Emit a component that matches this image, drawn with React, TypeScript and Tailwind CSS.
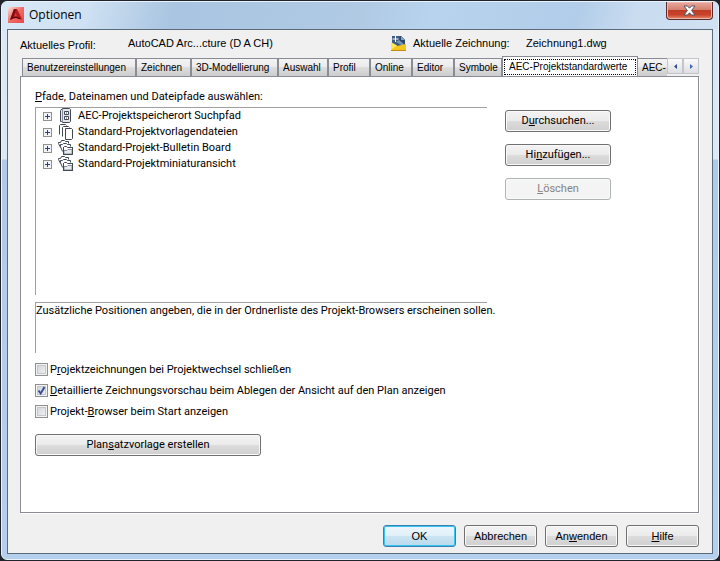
import { useState } from "react";

const dialogFont = "font-['Liberation_Sans',Arial,sans-serif]";
const panelFont = "font-['Roboto','Liberation_Sans',sans-serif]";

const buttonBase =
  "h-[22px] rounded-[3px] border border-[#707070] bg-[linear-gradient(#f3f3f3_0%,#ebebeb_48%,#dcdcdc_52%,#cfcfcf_100%)] text-center shadow-[inset_0_0_0_1px_#fafafa] disabled:border-[#adb2b5] disabled:bg-none disabled:bg-[#f4f4f4] disabled:text-[#838383]";

const tabs = [
  { label: "Benutzereinstellungen", width: "w-[114px]" },
  { label: "Zeichnen", width: "w-[55px]" },
  { label: "3D-Modellierung", width: "w-[87px]" },
  { label: "Auswahl", width: "w-[50px]" },
  { label: "Profil", width: "w-[42px]" },
  { label: "Online", width: "w-[42px]" },
  { label: "Editor", width: "w-[42px]" },
  { label: "Symbole", width: "w-[48px]" },
  { label: "AEC-Projektstandardwerte", width: "w-[136px]" },
];

const treeItems = [
  { label: "AEC-Projektspeicherort Suchpfad", icon: "cabinet" },
  { label: "Standard-Projektvorlagendateien", icon: "pages" },
  { label: "Standard-Projekt-Bulletin Board", icon: "folders" },
  { label: "Standard-Projektminiaturansicht", icon: "folders" },
];

function AppLogo() {
  return (
    <svg className="h-4 w-4" viewBox="0 0 16 16">
      <defs>
        <linearGradient id="logo" x1="0" y1="0" x2="1" y2="1">
          <stop offset="0" stopColor="#fbe3e0" />
          <stop offset="0.5" stopColor="#ef6a66" />
          <stop offset="1" stopColor="#e9474a" />
        </linearGradient>
      </defs>
      <rect width="16" height="16" fill="url(#logo)" />
      <path d="M6 2h3l5 10-4-1H5l-3 2z" fill="#b51a1c" />
      <path d="M6 2h2L5 11l-3 2z" fill="#7a0b0e" />
      <path d="M7.5 6L9 9H6.4z" fill="#dc3a3c" />
      <path d="M2 13l3-3h5l4 2.5-3-.5-3-1-3 .5z" fill="#5c0709" />
    </svg>
  );
}

function DrawingIcon() {
  return (
    <svg className="h-4 w-4" viewBox="0 0 16 16">
      <path d="M2 1h8l4 4v9H1V1z" fill="#3d5c84" />
      <path d="M9 1h1l4 4v6L8 6z" fill="#2c486c" />
      <path d="M10 1v4h4z" fill="#8ca3bd" />
      <path d="M5 7l3-2 6 5v2z" fill="#7995b3" />
      <path d="M4.5 1v6M1.5 4h6" stroke="#fff" />
      <path d="M0 8h1l5 3 9-2v7H0z" fill="#f4c51c" />
      <path d="M0 7l6 3.500-6 4.500z" fill="#ffe45c" />
      <path d="M0 15.500h15" stroke="#c48a0c" />
    </svg>
  );
}

function TreeIcon({ kind }: { kind: string }) {
  if (kind === "cabinet") {
    return (
      <svg className="h-4 w-4" viewBox="0 0 16 16" fill="#fff" stroke="#3f4654">
        <path d="M3.5 13.5h-1v-11l2-2h7l1 1v12l-1 1h-7z" fill="#e3e6ea" />
        <path d="M4.5 1v13" fill="none" stroke="#8a909a" />
        <path d="M6.5 3.5h4v3h-4zM6.5 8.5h4v3h-4z" />
        <path d="M8 5h1M8 10h1" />
      </svg>
    );
  }
  if (kind === "pages") {
    return (
      <svg className="h-4 w-4" viewBox="0 0 16 16" fill="#fff" stroke="#3f4654">
        <path d="M1.5 10.5v-9l1-1h5l1 1" />
        <path d="M4.5 12.5v-9l1-1h5l1 1" />
        <path d="M7.5 4.5h6l1 1v9l-1 1h-6z" />
      </svg>
    );
  }
  return (
    <svg className="h-4 w-4" viewBox="0 0 16 16" fill="#fff" stroke="#3f4654">
      <path d="M2.5 7.5l-2-4v-1h2l1-2h3l1 1h3v2" />
      <path d="M4.5 11.5l-2-5v-2h2l1-1h3l1 1h3v2" />
      <path d="M5.500 14.500v-7l1-1h2l1 1h5v7z" />
      <path d="M6 14v-3.500h3l1-1h4V14z" fill="#e9ecef" stroke="#8a909a" />
      <path d="M5.500 7v7.500h9V7" fill="none" />
    </svg>
  );
}

function Option({ id, defaultChecked = false, children }: { id: string; defaultChecked?: boolean; children: React.ReactNode }) {
  return (
    <div className="flex h-[21px] items-center gap-[2px]">
      <span className="grid h-[13px] w-[13px]">
        <input
          id={id}
          type="checkbox"
          defaultChecked={defaultChecked}
          className="peer col-start-1 row-start-1 h-[13px] w-[13px] appearance-none border border-[#8e8f8f] bg-[linear-gradient(135deg,#cbcfd5,#f6f6f6)] shadow-[inset_0_0_0_1px_#f4f4f4,inset_0_0_0_2px_#c3c7cc]"
        />
        <svg className="pointer-events-none invisible col-start-1 row-start-1 h-[13px] w-[13px] peer-checked:visible" viewBox="0 0 13 13">
          <path d="M3.5 6.5l2.2 3L9.5 3" fill="none" stroke="#3b4f93" strokeWidth="2" />
        </svg>
      </span>
      <label htmlFor={id}>{children}</label>
    </div>
  );
}

export default function App() {
  const [activeTab, setActiveTab] = useState(8);

  return (
    <div className={`flex min-h-screen flex-col bg-[#20232a] p-px text-[11px] leading-4 text-black ${dialogFont}`}>
      <div className="flex grow flex-col rounded-[6px] border border-[#e8f3fd] bg-[linear-gradient(#d8e7f6_0px,#dce8f4_157px,#b0cbe7_158px,#b5d0ec_100%)] px-[5px] pb-[5px]">
        <header className="-mx-[5px] flex h-[27px] items-start justify-between rounded-t-[5px] bg-[linear-gradient(105deg,#d9e8f6_0%,#cfe1f3_12%,#a9c5e1_24%,#b0cae4_50%,#b8d3ed_60%,#b2cde9_80%,#c9dcf0_88%,#cfe1f2_100%)] pl-[6px] pr-[5px]">
          <div className="flex items-center gap-[5px] pt-[5px]">
            <AppLogo />
            <h1 className="font-['Open_Sans',sans-serif] text-[12px] leading-4">Optionen</h1>
          </div>
          <button
            type="button"
            aria-label="Schließen"
            className="flex h-[18px] w-[47px] items-center justify-center rounded-b-[4px] border border-t-0 border-[#5b2a2c] bg-[linear-gradient(#e8aaa0_0%,#d5806f_45%,#bf3c26_50%,#c9432c_75%,#e58a6a_100%)] shadow-[inset_0_0_0_1px_#eeb9ae]"
          >
            <svg className="h-[11px] w-[13px]" viewBox="0 0 13 11">
              <path d="M1 1h3.5l2 2.2 2-2.2H12L8.6 5.5 12 10H8.5l-2-2.2-2 2.2H1l3.4-4.5z" fill="#fff" stroke="#535666" />
            </svg>
          </button>
        </header>

        <main className="flex grow flex-col border border-[#5a6b7c] bg-[#f0f0f0] px-3 pb-[6px]">
          <div className="flex h-[26px] items-center">
            <span className="w-[108px] pt-[3px]">Aktuelles Profil:</span>
            <span className="w-[263px]">AutoCAD Arc...cture (D A CH)</span>
            <DrawingIcon />
            <span className="w-[119px] pl-[6px]">Aktuelle Zeichnung:</span>
            <span>Zeichnung1.dwg</span>
          </div>

          <div className="flex h-5 items-end pl-[2px] pr-px">
            {/* the last tab is cut off by the scroll buttons */}
            <div role="tablist" className="flex min-w-0 flex-1 items-end overflow-hidden text-[10px]">
              {tabs.map((tab, index) => (
                <button
                  key={tab.label}
                  type="button"
                  role="tab"
                  aria-selected={activeTab === index}
                  onClick={() => setActiveTab(index)}
                  className={`shrink-0 whitespace-nowrap border-x border-t border-[#898c95] text-left ${tab.width} ${
                    activeTab === index
                      ? "h-5 bg-white p-px"
                      : "h-[18px] bg-[linear-gradient(#f3f3f3_0%,#ebebeb_49%,#dddddd_50%,#cdcdcd_100%)] px-1"
                  }`}
                >
                  {activeTab === index ? (
                    <span className="block border border-dotted border-black pl-1 leading-[14px]">{tab.label}</span>
                  ) : (
                    tab.label
                  )}
                </button>
              ))}
              <button
                type="button"
                role="tab"
                className="h-[18px] min-w-7 flex-1 border-t border-[#898c95] bg-[linear-gradient(#f3f3f3_0%,#ebebeb_49%,#dddddd_50%,#cdcdcd_100%)] pl-1 text-left"
              >
                AEC-
              </button>
            </div>
            <div className="flex h-[18px] items-start">
              <button type="button" aria-label="Zurück" className="flex h-4 w-4 items-center justify-center border border-[#c3c5cb] bg-[linear-gradient(#fafafa,#dedfe3)]">
                <svg className="h-[5px] w-[3px]" viewBox="0 0 3 5">
                  <path d="M3 0v5L0 2.5z" fill="#2c4a8c" />
                </svg>
              </button>
              <button type="button" aria-label="Weiter" className="flex h-4 w-4 items-center justify-center border border-[#c3c5cb] bg-[linear-gradient(#fafafa,#dedfe3)]">
                <svg className="h-[5px] w-[3px]" viewBox="0 0 3 5">
                  <path d="M0 0v5l3-2.5z" fill="#3d64b8" />
                </svg>
              </button>
            </div>
          </div>

          <div className={`mr-px grow border border-[#898c95] bg-white pl-[14px] pt-3 shadow-[1px_1px_0_#fff] ${panelFont}`}>
            <div className="flex gap-[18px]">
              <section className="w-[452px]">
                <h2 className="mb-[2px] leading-4">
                  <u>P</u>fade, Dateinamen und Dateipfade auswählen:
                </h2>
                <ul className="h-[188px] border-l border-t border-[#a0a0a0]">
                  {treeItems.map((item) => (
                    <li key={item.label} className="flex h-4 items-center pl-[7px]">
                      <button type="button" aria-label="Erweitern" className="mr-[6px] flex h-[9px] w-[9px] items-center justify-center border border-[#919191] bg-[#f4f4f4]">
                        <svg className="h-[5px] w-[5px]" viewBox="0 0 5 5">
                          <path d="M0 2.5h5M2.5 0v5" stroke="#1f3f9a" />
                        </svg>
                      </button>
                      <TreeIcon kind={item.icon} />
                      <span className="pl-[4px]">{item.label}</span>
                    </li>
                  ))}
                </ul>
                <p className="mt-[7px] h-[51px] whitespace-nowrap border-l border-t border-[#a0a0a0]">
                  Zusätzliche Positionen angeben, die in der Ordnerliste des Projekt-Browsers erscheinen sollen.
                </p>
                <div className="mt-[6px]">
                  <Option id="close-drawings">
                    P<u>r</u>ojektzeichnungen bei Projektwechsel schließen
                  </Option>
                  <Option id="detailed-preview" defaultChecked>
                    <u>D</u>etaillierte Zeichnungsvorschau beim Ablegen der Ansicht auf den Plan anzeigen
                  </Option>
                  <Option id="show-browser">
                    Projekt-<u>B</u>rowser beim Start anzeigen
                  </Option>
                </div>
                <button type="button" className={`mt-3 w-[226px] ${buttonBase}`}>
                  Plan<u>s</u>atzvorlage erstellen
                </button>
              </section>

              <div className="flex w-[106px] flex-col gap-3 pt-[21px]">
                <button type="button" className={buttonBase}>
                  D<u>u</u>rchsuchen...
                </button>
                <button type="button" className={buttonBase}>
                  Hi<u>n</u>zufügen...
                </button>
                <button type="button" disabled className={buttonBase}>
                  <u>L</u>öschen
                </button>
              </div>
            </div>
          </div>

          <footer className="flex justify-end gap-2 pr-px pt-3">
            <button
              type="button"
              className="h-[22px] w-[73px] rounded-[3px] border border-[#3c7fb1] bg-[linear-gradient(#eef6fb_0%,#e0f0f9_48%,#cbe4f2_52%,#b9daec_100%)] shadow-[inset_0_0_0_1px_#35c5f5]"
            >
              OK
            </button>
            <button type="button" className={`w-[73px] ${buttonBase}`}>
              Abbrechen
            </button>
            <button type="button" className={`w-[73px] ${buttonBase}`}>
              An<u>w</u>enden
            </button>
            <button type="button" className={`w-[73px] ${buttonBase}`}>
              <u>H</u>ilfe
            </button>
          </footer>
        </main>
      </div>
    </div>
  );
}
